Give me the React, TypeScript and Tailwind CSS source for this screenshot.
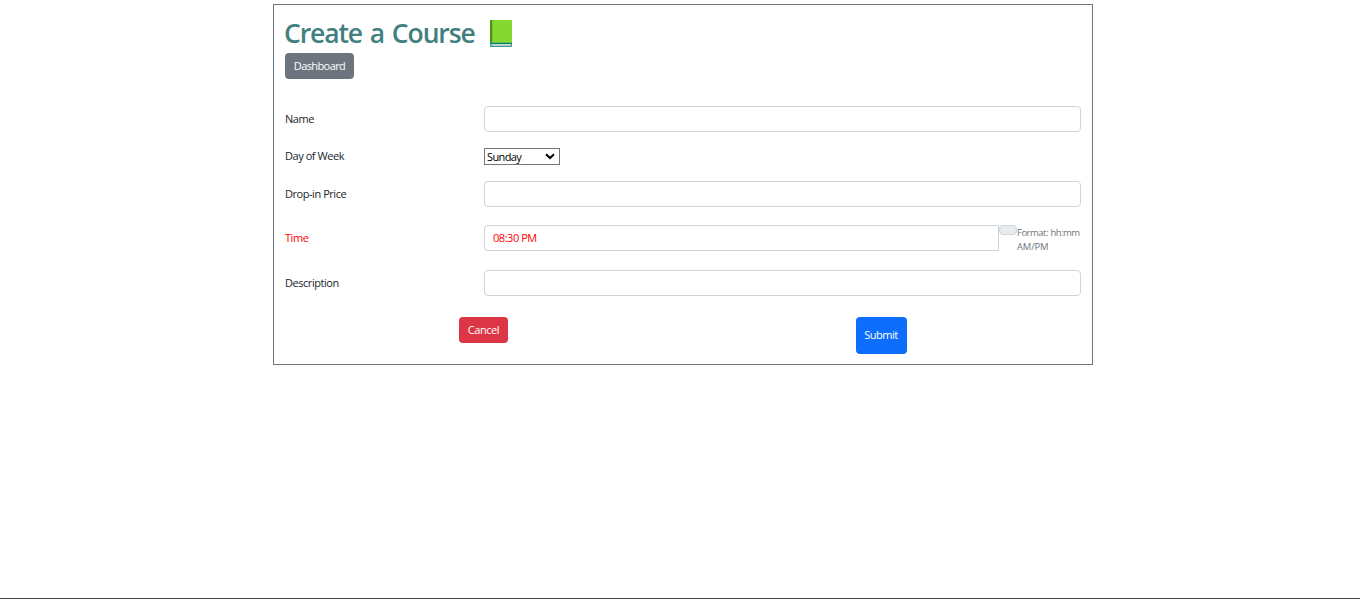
import React from "react";

const inputClass =
  "block h-[26px] w-full rounded-[4px] border border-[#ced4da] bg-white px-2 text-[11px] tracking-[-0.4px] outline-none";

function Row({
  label,
  className,
  children,
}: {
  label: string;
  className: string;
  children: React.ReactNode;
}) {
  return (
    <div className={`flex items-center ${className}`}>
      <label className="w-[199px] shrink-0 pb-[2px] leading-[17px]">{label}</label>
      <div className="flex min-w-0 flex-1 items-start">{children}</div>
    </div>
  );
}

function BookIcon() {
  return (
    <svg width="22" height="27" viewBox="0 0 22 27" className="mt-[4px] ml-[15px]">
      <path d="M1 0H21a1 1 0 0 1 1 1V23H0V1a1 1 0 0 1 1-1Z" fill="#86d72f" />
      <path d="M1 0H2.2V23H0V1a1 1 0 0 1 1-1Z" fill="#44911b" />
      <path d="M0 22.5H22V26a1 1 0 0 1-1 1H1a1 1 0 0 1-1-1Z" fill="#2fa08c" />
      <rect x="1" y="23" width="21" height="1" fill="#008463" />
      <rect x="1.5" y="24" width="19.5" height="1.8" fill="#d3d3d3" />
    </svg>
  );
}

export default function App() {
  return (
    <div className="flex h-[599px] flex-col overflow-hidden border-b border-[#45453d] bg-white pt-1 font-['Open_Sans','Noto_Sans',sans-serif] text-[11px] tracking-[-0.45px] text-[#212529]">
      <main className="ml-[273px] h-[361px] w-[820px] border border-[#6c757d] px-[11px] pt-[11px]">
        <div className="flex h-[37px] items-start">
          <h1 className="-ml-px w-[191px] text-[26.5px] leading-[35px] font-semibold tracking-[-1.1px] [word-spacing:2px] whitespace-nowrap text-[#417f80]">
            Create a Course
          </h1>
          <BookIcon />
        </div>
        <button className="block h-[26px] w-[69px] rounded-[4px] bg-[#6c757d] text-center leading-[26px] tracking-[-0.6px] text-white">
          Dashboard
        </button>
        <form>
          <Row label="Name" className="mt-[27px] h-[26px]">
            <input className={inputClass} />
          </Row>
          <Row label="Day of Week" className="mt-4 h-[17px]">
            <button
              type="button"
              className="flex h-[17px] w-[76px] items-center justify-between border border-[#767676] bg-white pr-[4px] pl-[2px] leading-[15px] tracking-[-0.6px] text-black"
            >
              <span>Sunday</span>
              <svg width="10" height="7" viewBox="0 0 10 7" fill="none">
                <path d="M1 1.2L5 5L9 1.2" stroke="#000" strokeWidth="2" />
              </svg>
            </button>
          </Row>
          <Row label="Drop-in Price" className="mt-4 h-[26px]">
            <input className={inputClass} />
          </Row>
          <Row label="Time" className="mt-[18px] h-[26px] text-[#ff0000]">
            <input
              className="block h-[26px] w-[515px] shrink-0 rounded-l-[4px] border border-[#ced4da] bg-white px-2 pb-[2px] text-[11px] tracking-[-0.45px] outline-none"
              defaultValue="08:30 PM"
            />
            <span className="h-[10px] w-[18px] shrink-0 rounded-[4px] border border-[#ced4da] bg-[#e9ecef]" />
            <small className="h-[26px] w-[64px] shrink-0 pt-px text-[9.5px] leading-[14px] tracking-[-0.5px] [word-spacing:0.5px] whitespace-nowrap text-[#6c757d]">
              Format: hh:mm
              <br />
              <span className="tracking-[-0.2px]">AM/PM</span>
            </small>
          </Row>
          <Row label="Description" className="mt-[19px] h-[26px]">
            <input className={inputClass} />
          </Row>
          <div className="mt-[21px] flex items-start">
            <div className="flex w-[397px] justify-center">
              <button type="button" className="h-[26px] w-[49px] rounded-[4px] bg-[#dc3545] text-white">
                Cancel
              </button>
            </div>
            <div className="flex w-[398px] justify-center">
              <button type="button" className="h-[37px] w-[51px] rounded-[4px] bg-[#0d6efd] text-white">
                Submit
              </button>
            </div>
          </div>
        </form>
      </main>
    </div>
  );
}
